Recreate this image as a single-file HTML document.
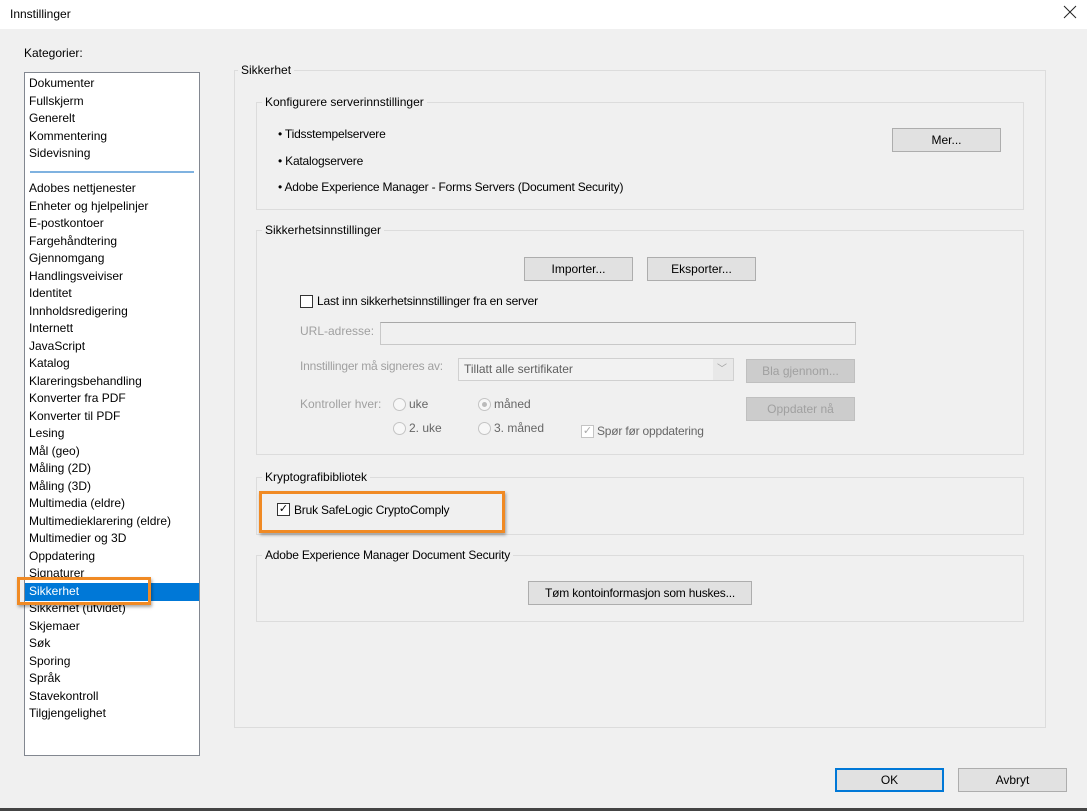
<!DOCTYPE html>
<html><head><meta charset="utf-8"><style>
*{box-sizing:border-box;margin:0;padding:0}
body{width:1087px;height:811px;background:#f0f0f0;font-family:"Liberation Sans",sans-serif;font-size:12px;color:#000;position:relative;overflow:hidden}
.a{position:absolute;white-space:nowrap}
.title{left:0;top:0;width:1087px;height:29px;background:#fff}
.list{left:24px;top:72px;width:176px;height:684px;background:#fff;border:1px solid #828790}
.item{position:absolute;left:4px;height:17px;line-height:17px}
.grp{position:absolute;border:1px solid #dcdcdc}
.lbl{position:absolute;background:#f0f0f0;padding:0 3px;line-height:14px}
.btn{position:absolute;height:24px;background:#e1e1e1;border:1px solid #adadad;text-align:center;line-height:22px}
.dis{color:#a0a0a0}
.cb{position:absolute;width:13px;height:13px;border:1px solid #333;background:#fff}
.rb{position:absolute;width:13px;height:13px;border:1px solid #c4c4c4;border-radius:50%;background:#f7f7f7}
.t{letter-spacing:-0.2px}
</style></head><body>
<div class="a title"></div>
<div class="a" style="left:10px;top:7px">Innstillinger</div>
<svg class="a" style="left:1063px;top:5px" width="14" height="14" viewBox="0 0 14 14"><path d="M1 1L13 13M13 1L1 13" stroke="#222" stroke-width="1"/></svg>
<div class="a" style="left:24px;top:46px">Kategorier:</div>
<div class="a list">
<div class="item" style="top:2px">Dokumenter</div>
<div class="item" style="top:19.5px">Fullskjerm</div>
<div class="item" style="top:37px">Generelt</div>
<div class="item" style="top:54.5px">Kommentering</div>
<div class="item" style="top:72px">Sidevisning</div>
<div style="position:absolute;left:5px;top:98px;width:164px;height:2px;background:#7fb2e0"></div>
<div class="item" style="top:107px">Adobes nettjenester</div>
<div class="item" style="top:124.5px">Enheter og hjelpelinjer</div>
<div class="item" style="top:142px">E-postkontoer</div>
<div class="item" style="top:159.5px">Fargehåndtering</div>
<div class="item" style="top:177px">Gjennomgang</div>
<div class="item" style="top:194.5px">Handlingsveiviser</div>
<div class="item" style="top:212px">Identitet</div>
<div class="item" style="top:229.5px">Innholdsredigering</div>
<div class="item" style="top:247px">Internett</div>
<div class="item" style="top:264.5px">JavaScript</div>
<div class="item" style="top:282px">Katalog</div>
<div class="item" style="top:299.5px">Klareringsbehandling</div>
<div class="item" style="top:317px">Konverter fra PDF</div>
<div class="item" style="top:334.5px">Konverter til PDF</div>
<div class="item" style="top:352px">Lesing</div>
<div class="item" style="top:369.5px">Mål (geo)</div>
<div class="item" style="top:387px">Måling (2D)</div>
<div class="item" style="top:404.5px">Måling (3D)</div>
<div class="item" style="top:422px">Multimedia (eldre)</div>
<div class="item" style="top:439.5px">Multimedieklarering (eldre)</div>
<div class="item" style="top:457px">Multimedier og 3D</div>
<div class="item" style="top:474.5px">Oppdatering</div>
<div class="item" style="top:492px">Signaturer</div>
<div style="position:absolute;left:0;top:510px;width:174px;height:18px;background:#0078d7"></div>
<div class="item" style="top:510px;color:#fff">Sikkerhet</div>
<div class="item" style="top:527px">Sikkerhet (utvidet)</div>
<div class="item" style="top:544.5px">Skjemaer</div>
<div class="item" style="top:562px">Søk</div>
<div class="item" style="top:579.5px">Sporing</div>
<div class="item" style="top:597px">Språk</div>
<div class="item" style="top:614.5px">Stavekontroll</div>
<div class="item" style="top:632px">Tilgjengelighet</div>
</div>
<div class="a" style="left:17px;top:577px;width:134px;height:28px;border:3px solid #f08a24;box-shadow:1px 2px 3px rgba(0,0,0,.35)"></div>

<div class="grp" style="left:234px;top:70px;width:812px;height:658px"></div>
<div class="lbl" style="left:238px;top:63px">Sikkerhet</div>

<div class="grp" style="left:256px;top:102px;width:768px;height:108px"></div>
<div class="lbl" style="left:262px;top:95px">Konfigurere serverinnstillinger</div>
<div class="a t" style="left:278px;top:127px">• Tidsstempelservere</div>
<div class="a t" style="left:278px;top:154px">• Katalogservere</div>
<div class="a t" style="left:278px;top:180px">• Adobe Experience Manager - Forms Servers (Document Security)</div>
<div class="btn" style="left:892px;top:128px;width:109px">Mer...</div>

<div class="grp" style="left:256px;top:230px;width:768px;height:225px"></div>
<div class="lbl" style="left:262px;top:223px">Sikkerhetsinnstillinger</div>
<div class="btn" style="left:524px;top:257px;width:109px">Importer...</div>
<div class="btn" style="left:647px;top:257px;width:109px">Eksporter...</div>
<div class="cb" style="left:300px;top:295px"></div>
<div class="a t" style="left:317px;top:294px">Last inn sikkerhetsinnstillinger fra en server</div>
<div class="a dis" style="left:300px;top:324px">URL-adresse:</div>
<div class="a" style="left:380px;top:322px;width:476px;height:23px;border:1px solid #c8c8c8;border-top-color:#a8a8a8;background:#f0f0f0"></div>
<div class="a dis t" style="left:300px;top:359px">Innstillinger må signeres av:</div>
<div class="a" style="left:458px;top:358px;width:276px;height:23px;border:1px solid #d0d0d0;background:#e8e8e8"></div>
<div class="a" style="left:459px;top:359px;width:254px;height:21px;background:#f2f2f2"></div>
<div class="a" style="left:464px;top:362px;color:#606060">Tillatt alle sertifikater</div>
<div class="a dis" style="left:717px;top:360px;font-size:10px">﹀</div>
<div class="btn dis" style="left:746px;top:359px;width:109px;background:#ccc;border-color:#bfbfbf">Bla gjennom...</div>
<div class="a dis" style="left:300px;top:397px">Kontroller hver:</div>
<div class="rb" style="left:393px;top:398px"></div><div class="a" style="left:409px;top:397px;color:#666">uke</div>
<div class="rb" style="left:478px;top:398px"><div style="margin:3px;width:5px;height:5px;border-radius:50%;background:#bbb"></div></div><div class="a" style="left:494px;top:397px;color:#666">måned</div>
<div class="rb" style="left:393px;top:422px"></div><div class="a" style="left:409px;top:421px;color:#666">2. uke</div>
<div class="rb" style="left:478px;top:422px"></div><div class="a" style="left:494px;top:421px;color:#666">3. måned</div>
<div class="cb" style="left:581px;top:425px;border-color:#c4c4c4;color:#aaa;font-size:11px;line-height:11px;text-align:center">✓</div>
<div class="a t" style="left:597px;top:424px;color:#666">Spør før oppdatering</div>
<div class="btn dis" style="left:746px;top:397px;width:109px;background:#ccc;border-color:#bfbfbf">Oppdater nå</div>

<div class="grp" style="left:256px;top:477px;width:768px;height:58px"></div>
<div class="lbl" style="left:262px;top:470px">Kryptografibibliotek</div>
<div class="cb" style="left:277px;top:503px;font-size:11px;line-height:11px;text-align:center">✓</div>
<div class="a t" style="left:294px;top:503px">Bruk SafeLogic CryptoComply</div>
<div class="a" style="left:259px;top:491px;width:246px;height:42px;border:3px solid #f08a24;box-shadow:1px 2px 3px rgba(0,0,0,.35)"></div>

<div class="grp" style="left:256px;top:555px;width:768px;height:67px"></div>
<div class="lbl t" style="left:262px;top:548px">Adobe Experience Manager Document Security</div>
<div class="btn t" style="left:528px;top:581px;width:224px">Tøm kontoinformasjon som huskes...</div>

<div class="btn" style="left:835px;top:768px;width:109px;border:2px solid #0078d7;line-height:20px">OK</div>
<div class="btn" style="left:958px;top:768px;width:109px">Avbryt</div>
<div class="a" style="left:0;top:808px;width:1087px;height:3px;background:#444"></div>
</body></html>
